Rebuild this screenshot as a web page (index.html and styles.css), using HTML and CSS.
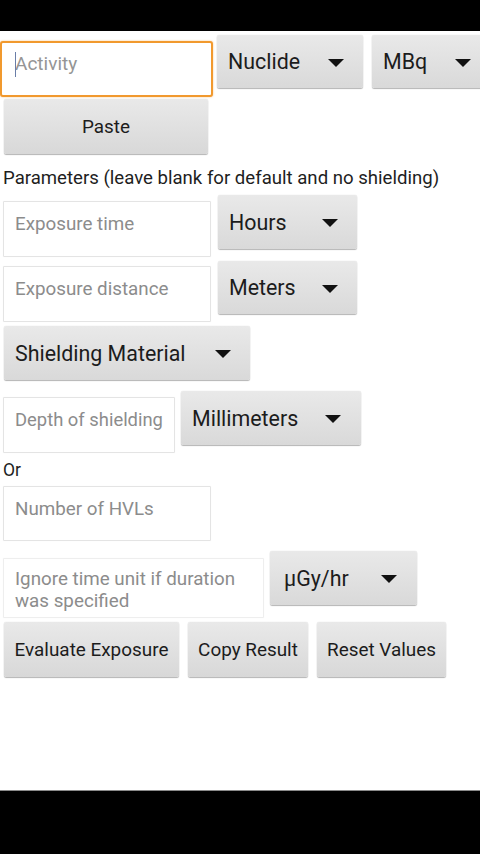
FILE: index.html
```html
<!DOCTYPE html>
<html>
<head>
<meta charset="utf-8">
<link rel="stylesheet" href="styles.css">
</head>
<body>
<div class="screen">
  <div class="statusbar"></div>
  <main class="main">
    <div class="row row-1">
      <div class="field field-activity focused"><span class="caret"></span><span class="hint">Activity</span></div>
      <div class="spinner sp-nuclide"><span>Nuclide</span><i class="tri"></i></div>
      <div class="spinner sp-mbq"><span>MBq</span><i class="tri"></i></div>
    </div>
    <div class="btn btn-paste">Paste</div>
    <div class="label label-params">Parameters (leave blank for default and no shielding)</div>
    <div class="row row-3">
      <div class="field field-std"><span class="hint">Exposure time</span></div>
      <div class="spinner sp-hours"><span>Hours</span><i class="tri"></i></div>
    </div>
    <div class="row row-4">
      <div class="field field-std"><span class="hint">Exposure distance</span></div>
      <div class="spinner sp-hours"><span>Meters</span><i class="tri"></i></div>
    </div>
    <div class="spinner sp-shield"><span>Shielding Material</span><i class="tri"></i></div>
    <div class="row row-6">
      <div class="field field-depth"><span class="hint">Depth of shielding</span></div>
      <div class="spinner sp-mm"><span>Millimeters</span><i class="tri"></i></div>
    </div>
    <div class="label label-or">Or</div>
    <div class="field field-std field-hvl"><span class="hint">Number of HVLs</span></div>
    <div class="row row-8">
      <div class="field field-ignore"><span class="hint">Ignore time unit if duration was specified</span></div>
      <div class="spinner sp-dose"><span>µGy/hr</span><i class="tri"></i></div>
    </div>
    <div class="row row-btns">
      <div class="btn btn-eval">Evaluate Exposure</div>
      <div class="btn btn-copy">Copy Result</div>
      <div class="btn btn-reset">Reset Values</div>
    </div>
  </main>
  <div class="navbar"></div>
</div>
</body>
</html>
```

FILE: styles.css
```css
html, body {
  margin: 0;
  padding: 0;
  background: #000;
}
.screen {
  width: 480px;
  height: 854px;
  display: flex;
  flex-direction: column;
  overflow: hidden;
  font-family: Roboto, "Noto Sans", sans-serif;
  color: #1e1e1e;
}
.statusbar {
  height: 31px;
  background: #000;
  flex: none;
}
.main {
  flex: 1;
  background: #fff;
  padding-top: 4px;
  display: flex;
  flex-direction: column;
  align-items: flex-start;
  border-bottom: 1px solid #8a8a8a;
  overflow: hidden;
}
.navbar {
  height: 63px;
  background: #000;
  flex: none;
}
.row {
  display: flex;
  align-items: flex-start;
  width: 100%;
}
.field {
  box-sizing: border-box;
  background: #fff;
  border: 1px solid #e4e4e4;
  border-radius: 1px;
  box-shadow: 0 0 1px rgba(0,0,0,0.06);
  padding: 11px 6px 0 11px;
  font-size: 18.8px;
  line-height: 22px;
  color: #8c8c8c;
  flex: none;
}
.field-activity {
  width: 213px;
  height: 56px;
  margin-top: 6px;
  border: 2px solid #f1992e;
  border-radius: 3px;
  box-shadow: 0 0 2px rgba(241,153,46,0.6);
  padding: 10px 10px 0 13px;
  font-size: 19px;
  position: relative;
  color: #959595;
}
.caret {
  position: absolute;
  left: 13px;
  top: 9px;
  width: 1px;
  height: 25px;
  background: #6a7ea8;
}
.field-std {
  width: 208px;
  height: 56px;
  margin-left: 3px;
  margin-top: 6px;
}
.row-4 .field-std {
  margin-top: 5px;
}
.field-depth {
  width: 172px;
  height: 56px;
  margin-left: 3px;
  margin-top: 6px;
  white-space: nowrap;
  font-size: 18.4px;
}
.field-hvl {
  margin-top: 6px;
  height: 55px;
}
.field-ignore {
  width: 261px;
  height: 60px;
  margin-left: 3px;
  margin-top: 7px;
  padding-top: 9px;
  border-color: #eeeeee;
}
.spinner {
  box-sizing: border-box;
  height: 53px;
  background: linear-gradient(#e9e9e9, #d9d9d9);
  border-radius: 2px;
  box-shadow: 0 1px 1px rgba(0,0,0,0.28), 0 0 1px rgba(0,0,0,0.2);
  display: flex;
  align-items: center;
  padding-left: 11px;
  position: relative;
  font-size: 21.4px;
  color: #1c1c1c;
  flex: none;
  white-space: nowrap;
}
.tri {
  position: absolute;
  top: 50%;
  margin-top: -3px;
  width: 0;
  height: 0;
  border-left: 8px solid transparent;
  border-right: 8px solid transparent;
  border-top: 8px solid #111;
}
.sp-nuclide {
  width: 146px;
  margin-left: 4px;
}
.sp-nuclide .tri { right: 19px; }
.sp-mbq {
  width: 112px;
  margin-left: 9px;
}
.sp-mbq .tri { left: 83px; }
.sp-hours {
  width: 139px;
  height: 54px;
  margin-left: 7px;
}
.sp-hours .tri { right: 19px; }
.row-3 { margin-top: 5px; }
.row-4 { margin-top: 4px; }
.row-4 .sp-hours { height: 53px; }
.sp-shield {
  width: 246px;
  height: 54px;
  margin-left: 4px;
  margin-top: 4px;
}
.sp-shield .tri { right: 19px; }
.row-6 { margin-top: 11px; }
.sp-mm {
  width: 180px;
  height: 54px;
  margin-left: 6px;
}
.sp-mm .tri { right: 20px; }
.row-8 { margin-top: 10px; }
.sp-dose {
  width: 147px;
  height: 54px;
  margin-left: 6px;
  padding-left: 14px;
}
.sp-dose .tri { right: 20px; }
.btn {
  box-sizing: border-box;
  height: 55px;
  background: linear-gradient(#e9e9e9, #d8d8d8);
  border-radius: 2px;
  box-shadow: 0 1px 1px rgba(0,0,0,0.28), 0 0 1px rgba(0,0,0,0.2);
  display: flex;
  align-items: center;
  justify-content: center;
  font-size: 18.9px;
  color: #1c1c1c;
  flex: none;
  white-space: nowrap;
}
.btn-paste {
  width: 204px;
  margin-left: 4px;
  margin-top: 2px;
}
.label {
  font-size: 18.6px;
  line-height: 24px;
  color: #1e1e1e;
  margin-left: 3px;
  white-space: nowrap;
}
.label-params {
  margin-top: 12px;
}
.label-or {
  margin-top: 7px;
  line-height: 20px;
  font-size: 17.5px;
}
.row-btns { margin-top: 4px; }
.btn-eval {
  width: 175px;
  margin-left: 4px;
}
.btn-copy {
  width: 120px;
  margin-left: 9px;
}
.btn-reset {
  width: 129px;
  margin-left: 9px;
}
```
